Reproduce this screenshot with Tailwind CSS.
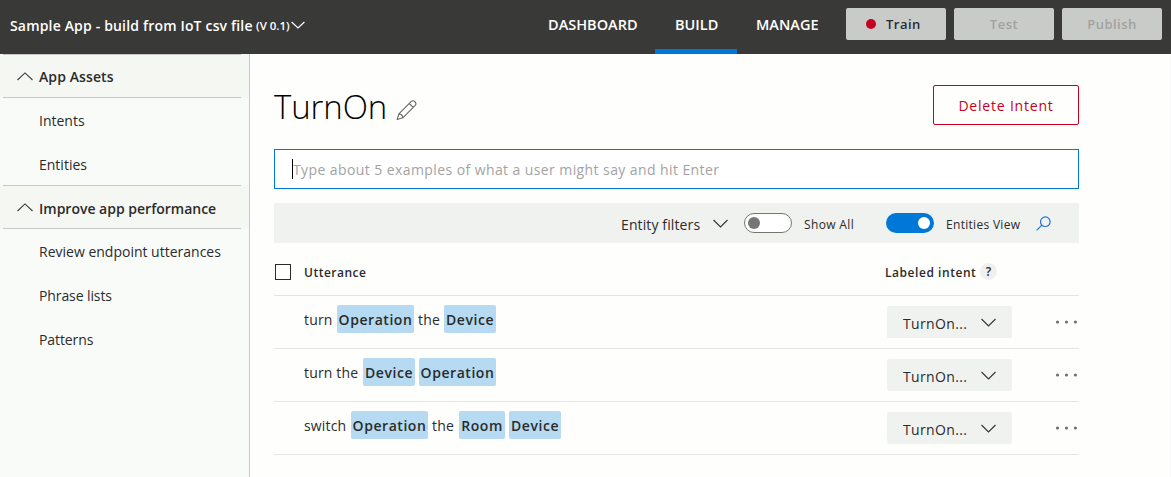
<!DOCTYPE html>
<html lang="en">
<head>
<meta charset="utf-8">
<title>TurnOn</title>
<script src="https://cdn.jsdelivr.net/npm/@tailwindcss/browser@4"></script>
</head>
<body class="w-[1171px] h-[477px] overflow-hidden bg-[#fefefd] font-['Open_Sans','Noto_Sans',sans-serif] text-[14px] text-[#2b2b2b] whitespace-nowrap">
<header class="flex h-[54px] bg-[#393937] text-white font-semibold">
  <div class="flex w-[538px] h-[50px] items-center pl-[10px]">
    <span class="w-[246px] tracking-[0.17px]">Sample App - build from IoT csv file</span><span class="w-[34px] pt-px text-[11.5px]">(V 0.1)</span>
    <svg class="ml-[1px]" width="14" height="8" viewBox="0 0 14 8" fill="none" stroke="#fff" stroke-width="1.2"><path d="M.6 1 7 7l6.400-6"/></svg>
  </div>
  <nav class="flex h-[54px] w-[308px] leading-[50px] text-[14.5px]">
    <span class="pl-[10px] w-[117px]">DASHBOARD</span>
    <span class="w-[82px] pl-[20px] border-b-[5px] border-[#0078d7]">BUILD</span>
    <span class="pl-[19px]">MANAGE</span>
  </nav>
  <div class="flex gap-2 pt-2 leading-[32px] text-[13px] tracking-[0.5px]">
    <button class="flex items-center w-[100px] h-8 rounded-[2px] bg-[#c9cbc9] text-[#2b2b2b] pl-5"><i class="size-[10px] rounded-full bg-[#c50021] mr-[10px]"></i>Train</button>
    <button class="w-[100px] h-8 rounded-[2px] bg-[#c9cbc9] text-[#a0a2a0]">Test</button>
    <button class="w-[100px] h-8 rounded-[2px] bg-[#c9cbc9] text-[#a0a2a0]">Publish</button>
  </div>
</header>
<div class="flex h-[423px]">
  <aside class="w-[250px] border-r border-[#c6c9c7] bg-[#f9fbf9] leading-[46px]">
    <section>
      <div class="bg-[#f5f7f3] pl-[3px]">
        <h2 class="flex items-center w-[238px] h-[44px] pl-[14px] border-y border-[#c6c9c7] font-semibold tracking-[0.1px]">
          <svg class="mr-[6px]" width="16" height="9" viewBox="0 0 16 9" fill="none" stroke="#3c3c3c" stroke-width="1.1"><path d="M.5 8 8 .9 15.500 8"/></svg><span class="pt-[2px]">App Assets</span></h2>
      </div>
      <a class="block h-[44px] pl-[39px]">Intents</a>
      <a class="block h-[43px] pl-[39px]">Entities</a>
    </section>
    <section>
      <div class="bg-[#f5f7f3] pl-[3px]">
        <h2 class="flex items-center w-[238px] h-[44px] pl-[14px] border-y border-[#c6c9c7] font-semibold">
          <svg class="mr-[6px]" width="16" height="9" viewBox="0 0 16 9" fill="none" stroke="#3c3c3c" stroke-width="1.1"><path d="M.5 8 8 .9 15.500 8"/></svg><span class="pt-[4px]">Improve app performance</span></h2>
      </div>
      <a class="block h-[44px] pl-[39px]">Review endpoint utterances</a>
      <a class="block h-[44px] pl-[39px] tracking-[-0.1px]">Phrase lists</a>
      <a class="block h-[44px] pl-[39px] tracking-[-0.1px]">Patterns</a>
    </section>
  </aside>
  <main class="w-[921px] pl-6 pr-[91px] border-r border-[#f7f8f7]">
    <div class="flex h-[95px] pt-[31px]">
      <h1 class="text-[33px] leading-[44px] font-light text-black w-[122px] tracking-[-0.1px]">TurnOn</h1>
      <svg class="mt-[14px]" width="21" height="22" viewBox="0 0 22 23" fill="none" stroke="#666" stroke-width="1.15" stroke-linejoin="round"><path d="M1.200 21.500 3 15.600 15.800 2.800a2.900 2.900 0 0 1 4.100 4.100L7.100 19.700Z M3 15.600c2.300.2 3.900 1.800 4.100 4.100 M13.900 4.700 18 8.800"/></svg>
      <button class="ml-auto w-[146px] h-[40px] rounded-[2px] border border-[#c50021] text-[#c50021] font-medium tracking-[0.8px]">Delete Intent</button>
    </div>
    <div class="flex items-center h-[40px] border border-[#0078d7] bg-white pl-[17px] text-[#a3a3a3] tracking-[0.41px]"><i class="h-5 w-px bg-black"></i>Type about 5 examples of what a user might say and hit Enter</div>
    <div class="flex items-center mt-[14px] h-[40px] bg-[#f0f2f0] pl-[346px]">
      <span class="w-[93px] pl-px pt-[2px] tracking-[0.12px]">Entity filters</span>
      <svg class="w-[15px]" width="15" height="9" viewBox="0 0 15 9" fill="none" stroke="#333" stroke-width="1.1"><path d="M.5 1 7.500 8l7-7"/></svg>
      <div class="flex items-center ml-4 w-[48px] h-[20px] rounded-full border border-[#767676] bg-white pl-[3px]"><i class="size-3 rounded-full bg-[#767676]"></i></div>
      <span class="ml-3 w-[82px] pt-[3px] text-[12px] tracking-[0.35px]">Show All</span>
      <div class="flex items-center justify-end w-[48px] h-[20px] rounded-full bg-[#0078d7] pr-1"><i class="size-3 rounded-full bg-white"></i></div>
      <span class="ml-3 w-[90px] pt-[3px] text-[12px] tracking-[0.3px]">Entities View</span>
      <svg width="15" height="15" viewBox="0 0 15 15" fill="none" stroke="#1f6fd6" stroke-width="1.2"><circle cx="9.300" cy="5.700" r="4.800"/><path d="M5.900 9.100.6 14.400"/></svg>
    </div>
    <div class="flex items-center h-[53px] border-b border-[#e4e5e4] text-[12px] font-semibold pl-px pt-[5px]">
      <i class="size-4 border border-[#2b2b2b] bg-white mr-[13px]"></i>
      <span class="w-[581px] pt-[2px] tracking-[0.5px]">Utterance</span>
      <span class="w-[95px] pt-[2px] tracking-[0.55px]">Labeled intent</span>
      <span class="grid place-items-center size-[17px] rounded-full bg-[#eff0ef]">?</span>
    </div>
    <div class="flex items-center h-[53px] border-b border-[#e4e5e4] pl-[30px]">
      <div class="flex w-[583px] mt-[-4px] leading-[30px] tracking-[0.15px]">
        <span class="w-[33px]">turn</span><b class="w-[77px] h-[28px] rounded-[2px] bg-[#b5daf1] text-center font-semibold tracking-[0.55px]">Operation</b>
        <span class="w-[30px] pl-1">the</span><b class="w-[52px] h-[28px] rounded-[2px] bg-[#b5daf1] text-center font-semibold tracking-[0.55px]">Device</b>
      </div>
      <button class="flex items-center w-[125px] h-8 rounded-[2px] bg-[#f0f2f0] pl-4"><span class="w-[78px] tracking-[0.35px] pt-[2px] text-left">TurnOn...</span><svg width="15" height="9" viewBox="0 0 15 9" fill="none" stroke="#333" stroke-width="1.1"><path d="M.5 1 7.500 8l7-7"/></svg></button>
      <svg class="ml-[43px]" width="22" height="4" viewBox="0 0 22 4" fill="#707070"><circle cx="2.500" cy="2" r="1.600"/><circle cx="11.500" cy="2" r="1.600"/><circle cx="20.400" cy="2" r="1.600"/></svg>
    </div>
    <div class="flex items-center h-[53px] border-b border-[#e4e5e4] pl-[30px]">
      <div class="flex w-[583px] mt-[-4px] leading-[30px] tracking-[0.15px]">
        <span class="w-[59px]">turn the</span><b class="w-[52px] h-[28px] rounded-[2px] bg-[#b5daf1] text-center font-semibold tracking-[0.55px]">Device</b>
        <b class="ml-1 w-[77px] h-[28px] rounded-[2px] bg-[#b5daf1] text-center font-semibold tracking-[0.55px]">Operation</b>
      </div>
      <button class="flex items-center w-[125px] h-8 rounded-[2px] bg-[#f0f2f0] pl-4"><span class="w-[78px] tracking-[0.35px] pt-[2px] text-left">TurnOn...</span><svg width="15" height="9" viewBox="0 0 15 9" fill="none" stroke="#333" stroke-width="1.1"><path d="M.5 1 7.500 8l7-7"/></svg></button>
      <svg class="ml-[43px]" width="22" height="4" viewBox="0 0 22 4" fill="#707070"><circle cx="2.500" cy="2" r="1.600"/><circle cx="11.500" cy="2" r="1.600"/><circle cx="20.400" cy="2" r="1.600"/></svg>
    </div>
    <div class="flex items-center h-[53px] border-b border-[#e4e5e4] pl-[30px]">
      <div class="flex w-[583px] mt-[-4px] leading-[30px] tracking-[0.15px]">
        <span class="w-[47px]">switch</span><b class="w-[77px] h-[28px] rounded-[2px] bg-[#b5daf1] text-center font-semibold tracking-[0.55px]">Operation</b>
        <span class="w-[31px] pl-1">the</span><b class="w-[46px] h-[28px] rounded-[2px] bg-[#b5daf1] text-center font-semibold tracking-[0.55px]">Room</b>
        <b class="ml-1 w-[52px] h-[28px] rounded-[2px] bg-[#b5daf1] text-center font-semibold tracking-[0.55px]">Device</b>
      </div>
      <button class="flex items-center w-[125px] h-8 rounded-[2px] bg-[#f0f2f0] pl-4"><span class="w-[78px] tracking-[0.35px] pt-[2px] text-left">TurnOn...</span><svg width="15" height="9" viewBox="0 0 15 9" fill="none" stroke="#333" stroke-width="1.1"><path d="M.5 1 7.500 8l7-7"/></svg></button>
      <svg class="ml-[43px]" width="22" height="4" viewBox="0 0 22 4" fill="#707070"><circle cx="2.500" cy="2" r="1.600"/><circle cx="11.500" cy="2" r="1.600"/><circle cx="20.400" cy="2" r="1.600"/></svg>
    </div>
  </main>
</div>
</body>
</html>
